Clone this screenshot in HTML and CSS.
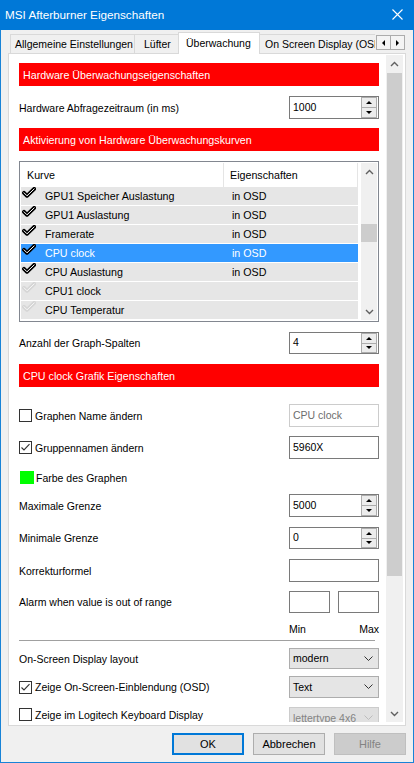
FILE: index.html
```html
<!DOCTYPE html>
<html lang="de">
<head>
<meta charset="utf-8">
<title>MSI Afterburner Eigenschaften</title>
<link rel="stylesheet" href="styles.css">
</head>
<body>
<div class="window">
  <div class="titlebar">
    <span class="title">MSI Afterburner Eigenschaften</span>
    <svg class="close" width="11" height="11" viewBox="0 0 11 11"><path d="M0.5 0.5 L10.5 10.5 M10.5 0.5 L0.5 10.5" stroke="#fff" stroke-width="1.1" fill="none"/></svg>
  </div>

  <div class="tabstrip">
    <div class="tabs">
      <div class="tab tab-general">Allgemeine Einstellungen</div>
      <div class="tab tab-fan">Lüfter</div>
      <div class="tab tab-active">Überwachung</div>
      <div class="tab tab-osd">On Screen Display (OSD)</div>
    </div>
    <div class="tab-arrows">
      <span class="tab-arrow"><span class="tri-left"></span></span>
      <span class="tab-arrow"><span class="tri-right"></span></span>
    </div>
  </div>

  <div class="panel">
    <div class="page">
      <div class="content">
        <div class="section-head">Hardware Überwachungseigenschaften</div>

        <div class="row h23 mt10">
          <span class="label">Hardware Abfragezeitraum (in ms)</span>
          <div class="spin h23">
            <span class="field-text">1000</span>
            <div class="spin-btns">
              <span class="spin-btn"><span class="tri-up"></span></span>
              <span class="spin-btn low"><span class="tri-down"></span></span>
            </div>
          </div>
        </div>

        <div class="section-head mt9">Aktivierung von Hardware Überwachungskurven</div>

        <div class="list mt10">
          <div class="list-body">
            <div class="list-head">
              <span class="col-name">Kurve</span>
              <span class="col-props">Eigenschaften</span>
            </div>
            <div class="list-row">
              <svg class="chk" width="14" height="11" viewBox="0 0 14 11"><path d="M2 5.8 L5 8.8 L12.2 1.9" fill="none" stroke="#000" stroke-width="3.9" stroke-linecap="round" stroke-linejoin="round"/><path d="M2 5.8 L5 8.8 L12.2 1.9" fill="none" stroke="#fff" stroke-width="1" stroke-linecap="round" stroke-linejoin="round"/></svg>
              <span class="cell-name">GPU1 Speicher Auslastung</span><span class="cell-props">in OSD</span>
            </div>
            <div class="list-row">
              <svg class="chk" width="14" height="11" viewBox="0 0 14 11"><path d="M2 5.8 L5 8.8 L12.2 1.9" fill="none" stroke="#000" stroke-width="3.9" stroke-linecap="round" stroke-linejoin="round"/><path d="M2 5.8 L5 8.8 L12.2 1.9" fill="none" stroke="#fff" stroke-width="1" stroke-linecap="round" stroke-linejoin="round"/></svg>
              <span class="cell-name">GPU1 Auslastung</span><span class="cell-props">in OSD</span>
            </div>
            <div class="list-row">
              <svg class="chk" width="14" height="11" viewBox="0 0 14 11"><path d="M2 5.8 L5 8.8 L12.2 1.9" fill="none" stroke="#000" stroke-width="3.9" stroke-linecap="round" stroke-linejoin="round"/><path d="M2 5.8 L5 8.8 L12.2 1.9" fill="none" stroke="#fff" stroke-width="1" stroke-linecap="round" stroke-linejoin="round"/></svg>
              <span class="cell-name">Framerate</span><span class="cell-props">in OSD</span>
            </div>
            <div class="list-row selected">
              <svg class="chk" width="14" height="11" viewBox="0 0 14 11"><path d="M2 5.8 L5 8.8 L12.2 1.9" fill="none" stroke="#000" stroke-width="3.9" stroke-linecap="round" stroke-linejoin="round"/><path d="M2 5.8 L5 8.8 L12.2 1.9" fill="none" stroke="#fff" stroke-width="1" stroke-linecap="round" stroke-linejoin="round"/></svg>
              <span class="cell-name">CPU clock</span><span class="cell-props">in OSD</span>
            </div>
            <div class="list-row">
              <svg class="chk" width="14" height="11" viewBox="0 0 14 11"><path d="M2 5.8 L5 8.8 L12.2 1.9" fill="none" stroke="#000" stroke-width="3.9" stroke-linecap="round" stroke-linejoin="round"/><path d="M2 5.8 L5 8.8 L12.2 1.9" fill="none" stroke="#fff" stroke-width="1" stroke-linecap="round" stroke-linejoin="round"/></svg>
              <span class="cell-name">CPU Auslastung</span><span class="cell-props">in OSD</span>
            </div>
            <div class="list-row">
              <svg class="chk" width="14" height="11" viewBox="0 0 14 11"><path d="M2 5.8 L5 8.8 L12.2 1.9" fill="none" stroke="#d6d6d6" stroke-width="3.9" stroke-linecap="round" stroke-linejoin="round"/><path d="M2 5.8 L5 8.8 L12.2 1.9" fill="none" stroke="#f6f6f6" stroke-width="1" stroke-linecap="round" stroke-linejoin="round"/></svg>
              <span class="cell-name">CPU1 clock</span><span class="cell-props"></span>
            </div>
            <div class="list-row">
              <svg class="chk" width="14" height="11" viewBox="0 0 14 11"><path d="M2 5.8 L5 8.8 L12.2 1.9" fill="none" stroke="#d6d6d6" stroke-width="3.9" stroke-linecap="round" stroke-linejoin="round"/><path d="M2 5.8 L5 8.8 L12.2 1.9" fill="none" stroke="#f6f6f6" stroke-width="1" stroke-linecap="round" stroke-linejoin="round"/></svg>
              <span class="cell-name">CPU Temperatur</span><span class="cell-props"></span>
            </div>
          </div>
          <div class="list-scroll">
            <span class="sb-arrow"><svg width="9" height="6" viewBox="0 0 9 6"><path d="M1 5 L4.5 1.5 L8 5" fill="none" stroke="#606060" stroke-width="1.4"/></svg></span>
            <span class="list-thumb"></span>
            <span class="sb-track"></span>
            <span class="sb-arrow"><svg width="9" height="6" viewBox="0 0 9 6"><path d="M1 1 L4.5 4.5 L8 1" fill="none" stroke="#606060" stroke-width="1.4"/></svg></span>
          </div>
        </div>

        <div class="row h22 mt10">
          <span class="label">Anzahl der Graph-Spalten</span>
          <div class="spin h22">
            <span class="field-text">4</span>
            <div class="spin-btns">
              <span class="spin-btn"><span class="tri-up"></span></span>
              <span class="spin-btn low"><span class="tri-down"></span></span>
            </div>
          </div>
        </div>

        <div class="section-head mt10">CPU clock Grafik Eigenschaften</div>

        <div class="row h23 mt17">
          <span class="label"><span class="checkbox"></span>Graphen Name ändern</span>
          <div class="textbox disabled h23">CPU clock</div>
        </div>

        <div class="row h23 mt9">
          <span class="label"><span class="checkbox"><svg width="11" height="11" viewBox="0 0 11 11"><path d="M1.5 5.5 L4 8 L9.5 2.2" fill="none" stroke="#333" stroke-width="1.1"/></svg></span>Gruppennamen ändern</span>
          <div class="textbox h23">5960X</div>
        </div>

        <div class="row h17 mt10">
          <span class="label"><span class="swatch"></span>Farbe des Graphen</span>
        </div>

        <div class="row h23 mt8">
          <span class="label">Maximale Grenze</span>
          <div class="spin h23">
            <span class="field-text">5000</span>
            <div class="spin-btns">
              <span class="spin-btn"><span class="tri-up"></span></span>
              <span class="spin-btn low"><span class="tri-down"></span></span>
            </div>
          </div>
        </div>

        <div class="row h22 mt10">
          <span class="label">Minimale Grenze</span>
          <div class="spin h22">
            <span class="field-text">0</span>
            <div class="spin-btns">
              <span class="spin-btn"><span class="tri-up"></span></span>
              <span class="spin-btn low"><span class="tri-down"></span></span>
            </div>
          </div>
        </div>

        <div class="row h23 mt10">
          <span class="label">Korrekturformel</span>
          <div class="textbox h23"></div>
        </div>

        <div class="row h22 mt9">
          <span class="label">Alarm when value is out of range</span>
          <div class="pair">
            <div class="textbox small h22"></div>
            <div class="textbox small h22"></div>
          </div>
        </div>

        <div class="row h14 mt8">
          <span class="label"></span>
          <div class="pair-labels"><span>Min</span><span>Max</span></div>
        </div>

        <div class="separator"></div>

        <div class="row h21 mt7">
          <span class="label">On-Screen Display layout</span>
          <div class="combo h21"><span>modern</span><svg width="9" height="5" viewBox="0 0 9 5"><path d="M0.5 0.5 L4.5 4.5 L8.5 0.5" fill="none" stroke="#333" stroke-width="1"/></svg></div>
        </div>

        <div class="row h22 mt7">
          <span class="label"><span class="checkbox"><svg width="11" height="11" viewBox="0 0 11 11"><path d="M1.5 5.5 L4 8 L9.5 2.2" fill="none" stroke="#333" stroke-width="1.1"/></svg></span>Zeige On-Screen-Einblendung (OSD)</span>
          <div class="combo h22"><span>Text</span><svg width="9" height="5" viewBox="0 0 9 5"><path d="M0.5 0.5 L4.5 4.5 L8.5 0.5" fill="none" stroke="#333" stroke-width="1"/></svg></div>
        </div>

        <div class="row row-top h22 mt9">
          <span class="label label-top"><span class="checkbox"></span>Zeige im Logitech Keyboard Display</span>
          <div class="combo disabled h22"><span>lettertype 4x6</span><svg width="9" height="5" viewBox="0 0 9 5"><path d="M0.5 0.5 L4.5 4.5 L8.5 0.5" fill="none" stroke="#bcbcbc" stroke-width="1"/></svg></div>
        </div>
      </div>

      <div class="vscroll">
        <span class="sb-arrow tall"><svg width="9" height="6" viewBox="0 0 9 6"><path d="M1 5 L4.5 1.5 L8 5" fill="none" stroke="#606060" stroke-width="1.4"/></svg></span>
        <span class="page-thumb"></span>
        <span class="sb-track"></span>
        <span class="sb-arrow tall"><svg width="9" height="6" viewBox="0 0 9 6"><path d="M1 1 L4.5 4.5 L8 1" fill="none" stroke="#606060" stroke-width="1.4"/></svg></span>
      </div>
    </div>
  </div>

  <div class="buttons">
    <span class="btn default">OK</span>
    <span class="btn">Abbrechen</span>
    <span class="btn disabled">Hilfe</span>
  </div>
</div>
</body>
</html>
```

FILE: styles.css
```css
* {
  box-sizing: border-box;
  margin: 0;
  padding: 0;
}

body {
  margin: 0;
  width: 414px;
  height: 763px;
  overflow: hidden;
  background: #f0f0f0;
  font-family: "Liberation Sans", Arial, sans-serif;
  font-size: 10.5px;
  color: #000;
}

/* window frame */
.window {
  width: 414px;
  height: 763px;
  border: 1px solid #1883d7;
  border-top: 0;
  background: #f0f0f0;
  display: flex;
  flex-direction: column;
}

.titlebar {
  height: 30px;
  margin: 0 -1px;
  background: #0078d7;
  color: #fff;
  display: flex;
  align-items: center;
  justify-content: space-between;
  padding: 0 11px 1px 5px;
  font-size: 11.7px;
  flex: none;
}

.close {
  display: block;
}

/* tab strip */
.tabstrip {
  height: 24px;
  display: flex;
  align-items: flex-end;
  padding: 0 8px 0 9px;
  position: relative;
  z-index: 1;
  flex: none;
}

.tabs {
  width: 365px;
  height: 24px;
  display: flex;
  align-items: flex-end;
  overflow: hidden;
}

.tab {
  flex: none;
  height: 19px;
  margin-bottom: 1px;
  border: 1px solid #d9d9d9;
  border-bottom: 0;
  border-right: 0;
  background: #f0f0f0;
  display: flex;
  align-items: center;
  white-space: nowrap;
}

.tab-general {
  width: 124px;
  padding-left: 4px;
}

.tab-fan {
  width: 44px;
  padding-left: 9px;
}

.tab-active {
  width: 82px;
  height: 22px;
  margin-bottom: 0;
  background: #fff;
  border-right: 1px solid #d9d9d9;
  padding: 0 0 2px 7px;
}

.tab-osd {
  width: 130px;
  padding-left: 5px;
  border-left: 0;
}

.tab-arrows {
  display: flex;
  margin: 0 0 4px 1px;
}

.tab-arrow {
  width: 15px;
  height: 15px;
  border: 1px solid #acacac;
  background: #f4f4f4;
  display: flex;
  align-items: center;
  justify-content: center;
}

.tab-arrow + .tab-arrow {
  border-left: 0;
  width: 14px;
}

.tri-left {
  border-top: 3.5px solid transparent;
  border-bottom: 3.5px solid transparent;
  border-right: 3.5px solid #000;
}

.tri-right {
  border-top: 3.5px solid transparent;
  border-bottom: 3.5px solid transparent;
  border-left: 3.5px solid #000;
}

/* tab page */
.panel {
  height: 673px;
  margin: -1px 7px 0 7px;
  border: 1px solid #d9d9d9;
  background: #fff;
  padding: 1px 2px 3px 1px;
  flex: none;
}

.page {
  height: 100%;
  display: flex;
}

.content {
  flex: 1;
  min-width: 0;
  overflow: hidden;
  padding: 8px 7px 0 9px;
  display: flex;
  flex-direction: column;
}

.section-head {
  height: 23px;
  flex: none;
  background: #ff0000;
  color: #fff;
  font-size: 10.7px;
  padding-left: 4px;
  display: flex;
  align-items: center;
}

.mt7 { margin-top: 7px; }
.mt8 { margin-top: 8px; }
.mt9 { margin-top: 9px; }
.mt10 { margin-top: 10px; }
.mt17 { margin-top: 17px; }

.h14 { height: 14px; }
.h17 { height: 17px; }
.h21 { height: 21px; }
.h22 { height: 22px; }
.h23 { height: 23px; }

.row {
  flex: none;
  display: flex;
  align-items: center;
  justify-content: space-between;
}

.row-top {
  align-items: flex-start;
}

.label {
  display: flex;
  align-items: center;
  white-space: nowrap;
}

.label-top {
  margin-top: 1px;
}

.checkbox {
  width: 13px;
  height: 13px;
  border: 1px solid #333;
  background: #fff;
  margin-right: 3px;
  display: flex;
  align-items: center;
  justify-content: center;
}

.checkbox svg {
  display: block;
}

.swatch {
  width: 14px;
  height: 13px;
  margin: 0 2px 0 1px;
  background: #00ff00;
}

/* text fields */
.textbox {
  width: 90px;
  border: 1px solid #7a7a7a;
  background: #fff;
  padding: 0 0 2px 3px;
  display: flex;
  align-items: center;
}

.textbox.disabled {
  border-color: #cccccc;
  color: #6d6d6d;
}

.pair {
  width: 90px;
  display: flex;
  justify-content: space-between;
}

.textbox.small {
  width: 41px;
}

.pair-labels {
  width: 90px;
  display: flex;
  justify-content: space-between;
  align-self: flex-end;
}

/* spin boxes */
.spin {
  width: 90px;
  border: 1px solid #7a7a7a;
  background: #fff;
  display: flex;
}

.field-text {
  flex: 1;
  padding: 0 0 2px 3px;
  display: flex;
  align-items: center;
}

.spin-btns {
  width: 17px;
  padding-right: 1px;
  display: flex;
  flex-direction: column;
}

.spin-btn {
  flex: 1;
  border: 1px solid #acacac;
  background: #ececec;
  display: flex;
  align-items: center;
  justify-content: center;
}

.spin-btn.low {
  border-top: 0;
}

.tri-up {
  border-left: 3px solid transparent;
  border-right: 3px solid transparent;
  border-bottom: 3px solid #000;
}

.tri-down {
  border-left: 3px solid transparent;
  border-right: 3px solid transparent;
  border-top: 3px solid #000;
}

/* combo boxes */
.combo {
  width: 90px;
  border: 1px solid #adadad;
  background: #e5e5e5;
  padding: 0 5px 1px 3px;
  display: flex;
  align-items: center;
  justify-content: space-between;
}

.combo.disabled {
  border-color: #cccccc;
  background: #e0e0e0;
  color: #838383;
}

.separator {
  flex: none;
  height: 1px;
  width: 356px;
  margin-top: 5px;
  background: #a0a0a0;
}

/* curve list */
.list {
  flex: none;
  height: 161px;
  border: 1px solid #828790;
  padding: 1px;
  display: flex;
  gap: 3px;
  font-size: 10.7px;
}

.list-body {
  width: 337px;
  display: flex;
  flex-direction: column;
}

.list-head {
  height: 24px;
  flex: none;
  display: flex;
  align-items: center;
  border-right: 1px solid #e5e5e5;
}

.col-name {
  width: 203px;
  height: 100%;
  padding-left: 6px;
  border-right: 1px solid #e5e5e5;
  display: flex;
  align-items: center;
}

.col-props {
  padding-left: 6px;
}

.list-row {
  height: 19px;
  flex: none;
  border-bottom: 1px solid #fff;
  background: #e6e6e6;
  display: flex;
  align-items: center;
  white-space: nowrap;
}

.list-row.selected {
  background: #3399ff;
  color: #fff;
}

.chk {
  flex: none;
  align-self: flex-start;
  margin: 0 9px 0 1px;
}

.cell-name {
  width: 187px;
  padding-bottom: 1px;
}

.cell-props {
  padding-bottom: 1px;
}

.list-scroll {
  width: 16px;
  background: #f0f0f0;
  display: flex;
  flex-direction: column;
}

.sb-arrow {
  height: 17px;
  flex: none;
  display: flex;
  align-items: center;
  justify-content: center;
}

.sb-arrow svg {
  display: block;
}

.list-thumb {
  height: 18px;
  margin-top: 44px;
  flex: none;
  background: #cdcdcd;
}

.sb-track {
  flex: 1;
}

/* page scrollbar */
.vscroll {
  width: 17px;
  flex: none;
  background: #f0f0f0;
  display: flex;
  flex-direction: column;
}

.page-thumb {
  height: 503px;
  margin: 1px 1px 0;
  flex: none;
  background: #cdcdcd;
}

/* dialog buttons */
.buttons {
  display: flex;
  justify-content: flex-end;
  gap: 9px;
  padding: 7px 7px 0 0;
  flex: none;
}

.btn {
  width: 72px;
  height: 22px;
  border: 1px solid #adadad;
  background: #e1e1e1;
  display: flex;
  align-items: center;
  justify-content: center;
  padding-bottom: 1px;
  font-size: 11px;
}

.btn.default {
  border-color: #0078d7;
  box-shadow: inset 0 0 0 1px #0078d7;
}

.btn.disabled {
  border-color: #bfbfbf;
  background: #cccccc;
  color: #838383;
}
```
